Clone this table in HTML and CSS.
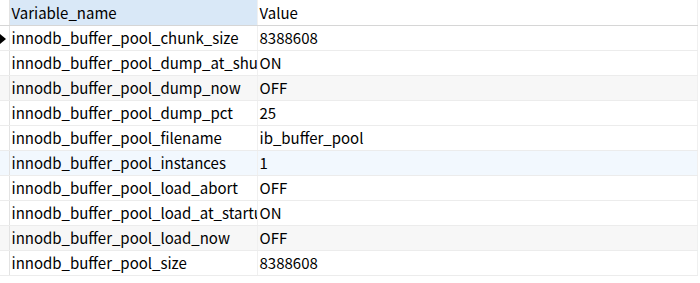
FILE: index.html
```html
<!DOCTYPE html>
<html lang="en">
<head>
    <meta charset="UTF-8">
    <title>Variables</title>
    <link rel="stylesheet" href="styles.css">
</head>
<body>
    <table class="grid">
        <colgroup>
            <col class="col-ind">
            <col class="col-name">
            <col class="col-value">
        </colgroup>
        <thead>
            <tr>
                <th class="ind"></th>
                <th class="sorted">Variable_name</th>
                <th>Value</th>
            </tr>
        </thead>
        <tbody>
            <tr><td class="ind"><span class="arrow"></span></td><td>innodb_buffer_pool_chunk_size</td><td>8388608</td></tr>
            <tr><td class="ind"></td><td>innodb_buffer_pool_dump_at_shutdown</td><td>ON</td></tr>
            <tr class="alt"><td class="ind"></td><td>innodb_buffer_pool_dump_now</td><td>OFF</td></tr>
            <tr><td class="ind"></td><td>innodb_buffer_pool_dump_pct</td><td>25</td></tr>
            <tr><td class="ind"></td><td>innodb_buffer_pool_filename</td><td>ib_buffer_pool</td></tr>
            <tr class="hover"><td class="ind"></td><td>innodb_buffer_pool_instances</td><td>1</td></tr>
            <tr><td class="ind"></td><td>innodb_buffer_pool_load_abort</td><td>OFF</td></tr>
            <tr><td class="ind"></td><td>innodb_buffer_pool_load_at_startup</td><td>ON</td></tr>
            <tr class="alt"><td class="ind"></td><td>innodb_buffer_pool_load_now</td><td>OFF</td></tr>
            <tr><td class="ind"></td><td>innodb_buffer_pool_size</td><td>8388608</td></tr>
        </tbody>
    </table>
</body>
</html>
```

FILE: styles.css
```css
body {
    margin: 0;
    background-color: #fff;
    font-family: "Noto Sans CJK SC", "Noto Sans", sans-serif;
    font-size: 15px;
    color: #000;
}
.grid {
    border-collapse: collapse;
    table-layout: fixed;
    width: 697px;
    border-right: 1px solid #e0e0e0;
}
.col-ind {
    width: 9px;
}
.col-name {
    width: 248px;
}
.col-value {
    width: 440px;
}
.grid th,
.grid td {
    height: 24px;
    padding: 0 0 0 2px;
    white-space: nowrap;
    overflow: hidden;
    text-align: left;
    font-weight: normal;
    line-height: 24px;
    border-bottom: 1px solid #ececec;
    border-right: 1px solid #f0f0f0;
}
.grid th {
    height: 25px;
    line-height: 25px;
    border-bottom: 1px solid #d6d6d6;
}
.grid th.sorted {
    background-color: #d9e8f7;
}
.grid .ind {
    padding: 0;
    border-right: 1px solid #e3e3e3;
    position: relative;
}
.alt td {
    background-color: #f7f7f7;
}
.hover td {
    background-color: #f2f8fe;
}
.arrow {
    position: absolute;
    left: 0;
    top: 8px;
    width: 0;
    height: 0;
    border-top: 5px solid transparent;
    border-bottom: 5px solid transparent;
    border-left: 6px solid #000;
}
```
